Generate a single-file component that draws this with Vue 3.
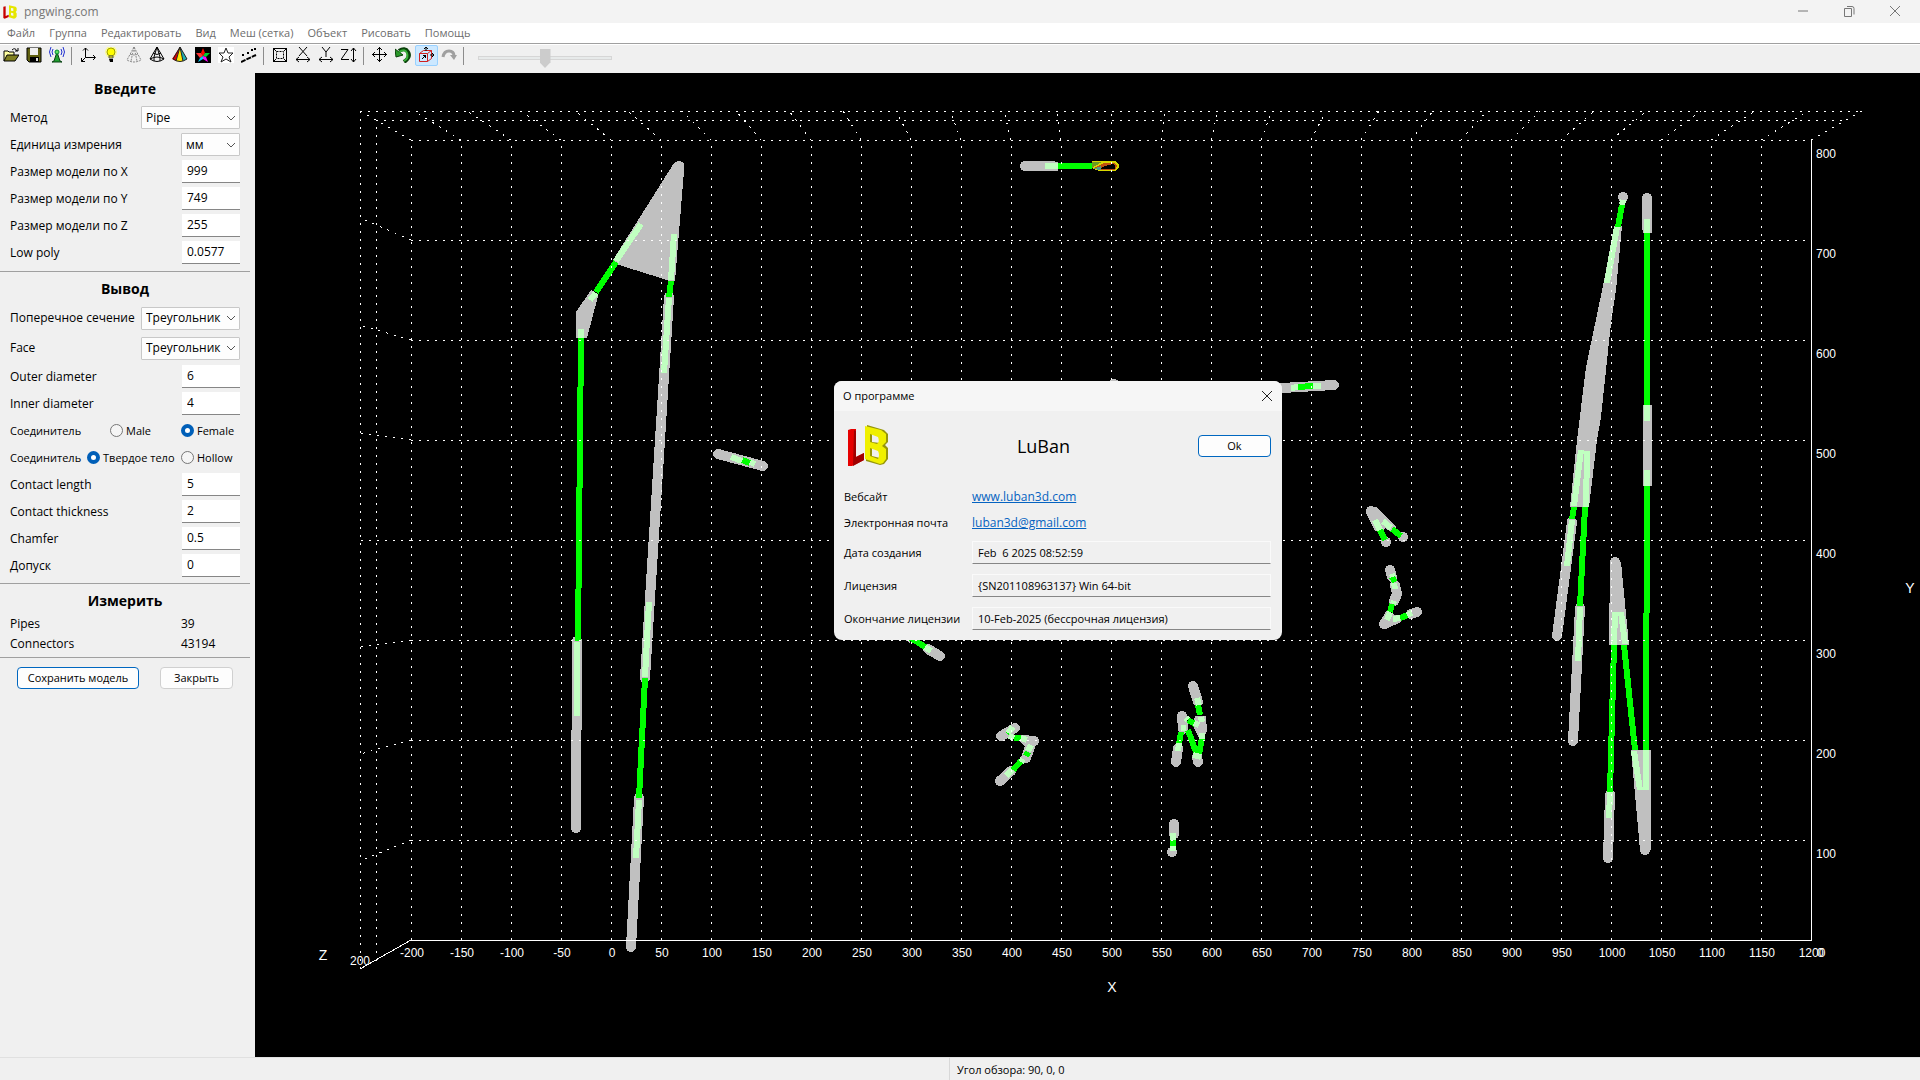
<script setup>
import { ref } from 'vue'

const menu = ['Файл', 'Группа', 'Редактировать', 'Вид', 'Меш (сетка)', 'Объект', 'Рисовать', 'Помощь']

const inputRows = ref([
  { id: 'size-x', label: 'Размер модели по X', value: '999' },
  { id: 'size-y', label: 'Размер модели по Y', value: '749' },
  { id: 'size-z', label: 'Размер модели по Z', value: '255' },
  { id: 'low-poly', label: 'Low poly', value: '0.0577' }
])
const diameterRows = ref([
  { id: 'outer', label: 'Outer diameter', value: '6' },
  { id: 'inner', label: 'Inner diameter', value: '4' }
])
const contactRows = ref([
  { id: 'length', label: 'Contact length', value: '5' },
  { id: 'thickness', label: 'Contact thickness', value: '2' },
  { id: 'chamfer', label: 'Chamfer', value: '0.5' },
  { id: 'tolerance', label: 'Допуск', value: '0' }
])
const aboutRows = ref([
  { id: 'built', label: 'Дата создания', value: 'Feb  6 2025 08:52:59' },
  { id: 'license', label: 'Лицензия', value: '{SN201108963137} Win 64-bit' },
  { id: 'expires', label: 'Окончание лицензии', value: '10-Feb-2025 (бессрочная лицензия)' }
])
const gender = ref('female')
const body = ref('solid')
const zoomLevel = ref(50)

// Scene coordinates: back wall spans 411..1811 by 140..940, front frame 360..1862 by 111..969
const columns = Array.from({ length: 29 }, (_, i) => ({
  x: 411 + i * 50,
  front: Math.round(360 + (i * 1502) / 28),
  label: String(-200 + i * 50)
}))
const rows = Array.from({ length: 8 }, (_, i) => ({
  y: 140 + i * 100,
  front: Math.round(111 + i * 107.2),
  label: String(800 - i * 100)
}))

// Connector bodies
const solids = [
  '674,163 684,163 684,171 675,281 670,281 616,264 613,260',
  '591,290 598,296 587,338 576,338 576,312',
  '1614,226 1622,226 1616,290 1611,323 1601,417 1597,440 1589,507 1570,507 1577,440 1586,367 1604,281',
  '1610,562 1621,562 1629,645 1609,645',
  '1631,750 1651,750 1651,850 1640,850',
  '1366,513 1376,507 1396,527 1391,532 1385,528 1382,531 1375,531',
  '1386,611 1393,614 1401,617 1401,622 1386,629 1380,622',
  '1021,735 1036,736 1038,741 1034,748 1029,751 1019,740',
  '1195,716 1206,716 1207,731 1204,738 1199,738 1193,726'
]
const knobs = [
  [679, 166], [1623, 197], [1615, 562], [1645, 850], [1371, 511], [1386, 542], [1403, 537],
  [1384, 624], [1390, 570], [1172, 852], [1114, 384], [1034, 741], [1182, 716]
]
const bars = [
  '577,641 576,828', '669,297 645,678', '639,798 631,947', '718,454 763,466', '1025,166 1053,166',
  '1282,388 1334,385', '1572,522 1557,636', '1580,608 1573,741', '1647,198 1647,228', '1610,795 1608,858',
  '928,649 940,656', '1390,570 1392,577', '1395,585 1397,594 1394,601', '1417,612 1411,614',
  '1015,728 1001,736', '1031,744 1026,758', '1011,771 1000,781', '1193,686 1198,702', '1182,716 1183,729',
  '1178,748 1176,762', '1197,757 1198,762', '1174,824 1174,834'
]
const squareBars = ['1647,405 1647,486', '1053,166 1058,166', '1647,228 1647,233', '1580,606 1580,610', '1572,519 1571,526', '1610,792 1610,798', '577,641 577,648', '669,297 668,302', '645,672 645,678', '639,798 638,804', '895,628 912,639']
const pipes = [
  '616,262 596,292', '581,338 578,641', '671,281 669,297', '645,678 639,798', '742,460 750,463',
  '1058,166 1092,166', '1298,387 1313,386', '1622,205 1618,227', '1574,507 1572,519', '1585,507 1580,606',
  '1647,233 1647,405', '1647,486 1646,750', '1614,645 1610,792', '1624,645 1635,750', '911,638 925,647',
  '1380,530 1385,540', '1392,529 1401,536', '1392,577 1395,582', '1392,604 1390,612', '1400,618 1408,615',
  '1014,738 1021,738', '1028,752 1026,756', '1021,761 1013,770', '1198,705 1200,715', '1188,720 1195,724',
  '1181,732 1179,744', '1188,730 1197,755', '1202,738 1199,754', '1173,839 1173,847', '1008,730 1011,733'
]
const joints = [
  '641,224 616,261', '674,234 671,280', '596,293 590,300', '581,329 581,338', '577,642 577,716', '669,298 664,373',
  '649,602 645,677', '639,800 636,858', '731,457 742,461', '750,462 755,464', '1045,166 1058,166', '1291,388 1298,387',
  '1313,386 1321,386', '1623,200 1622,205', '1617,227 1607,283', '1581,450 1574,506', '1587,451 1586,507',
  '1572,520 1567,566', '1580,607 1578,661', '1647,219 1647,233', '1647,405 1647,421', '1647,470 1647,486',
  '1615,612 1614,645', '1621,612 1625,644', '1610,792 1609,818', '1634,751 1640,790', '1646,750 1646,790',
  '1375,520 1380,530', '1383,521 1391,528', '1392,574 1393,577', '1394,583 1395,589', '1394,601 1393,604',
  '1390,612 1387,620', '1393,619 1400,618', '1407,615 1412,613', '1009,736 1014,738', '1021,738 1027,740',
  '1031,745 1028,751', '1023,759 1021,762', '1012,770 1006,776', '1197,698 1199,705', '1201,717 1202,722',
  '1194,723 1199,725', '1179,743 1178,751', '1202,733 1202,739', '1181,728 1186,728', '1193,755 1201,757',
  '1186,718 1188,720', '1173,833 1173,840', '1173,846 1173,851', '1013,727 1008,733', '925,647 931,651'
]
</script>

<template>
  <div class="app">
    <header class="titlebar">
      <svg class="app-icon" viewBox="0 0 42 42" aria-hidden="true">
        <path d="M1 5 8 4v29l9-4v7L5 41l-4-2z" fill="#c80000" />
        <path fill-rule="evenodd" d="M18 1l20 4 3 4v8l-3 4 3 4v10l-4 5-4 1-15-4zM24 9v8l7 1V10zm0 14v8l7 2v-8z" fill="#e6e600" />
      </svg>
      <h1>pngwing.com</h1>
      <div class="window-controls">
        <button type="button" aria-label="Свернуть"><svg viewBox="0 0 12 12"><path d="M1 6h10" /></svg></button>
        <button type="button" aria-label="Восстановить"><svg viewBox="0 0 12 12"><path d="M1.500 3.500h7v8h-7zM4 1.500h5q2 0 2 2v6" /></svg></button>
        <button type="button" aria-label="Закрыть окно"><svg viewBox="0 0 12 12"><path d="M1 1l10 10M11 1 1 11" /></svg></button>
      </div>
    </header>

    <nav class="menubar">
      <button v-for="item in menu" :key="item" type="button">{{ item }}</button>
    </nav>

    <div class="toolbar" role="toolbar">
      <button type="button" aria-label="Открыть">
        <svg viewBox="0 0 16 16"><path d="M1 14V4h4l1 1h5v3" fill="#ffffa0" stroke="#000" /><path d="M1 14l3-6h12l-4 6z" fill="#808020" stroke="#000" /><path d="M9 3q3-3 5 1m1-3v3h-3" fill="none" stroke="#000" /></svg>
      </button>
      <button type="button" aria-label="Сохранить">
        <svg viewBox="0 0 16 16"><path d="M1 1h14v14H3l-2-2z" fill="#606010" stroke="#000" /><path d="M4 1h8v7H4z" fill="#f0f0f0" /><path d="M4 10h9v5H4z" fill="#000" /><path d="M10 11h2v3h-2z" fill="#e0e0e0" /></svg>
      </button>
      <button type="button" aria-label="Соединение">
        <svg viewBox="0 0 16 16"><path d="M8 5l3 9 2 1H3l2-1z" fill="#20a030" stroke="#064010" /><circle cx="8" cy="5" r="2" fill="#60e060" stroke="#083" /><path d="M4 2q-2 3 0 6M12 2q2 3 0 6M2 0q-3 5 0 10M14 0q3 5 0 10" fill="none" stroke="#2030d0" /></svg>
      </button>
      <span class="divider"></span>
      <button type="button" aria-label="Оси">
        <svg viewBox="0 0 16 16"><path d="M5.500 1v9.500H15M5.500 10.500l-4 4M3 3.500l2.500-2.500 2.500 2.500M13 8l2.500 2.500L13 13M1.500 11v3.500H5" fill="none" stroke="#000" /></svg>
      </button>
      <button type="button" aria-label="Свет">
        <svg viewBox="0 0 16 16"><circle cx="8" cy="5" r="6" fill="#ffff60" opacity=".6" /><circle cx="8" cy="5" r="4" fill="#ff0" stroke="#a0a000" /><path d="M6 9h4v2H6z" fill="#ff0" stroke="#555" /><path d="M6 12h4v3H7z" fill="#000" /></svg>
      </button>
      <button type="button" aria-label="Точки">
        <svg viewBox="0 0 16 16"><path d="M8 0 1 13q7 4 14 0zM8 0 5 14M8 0l3 14M4 7q4 2 8 0" fill="none" stroke="#888" stroke-dasharray="2 1" /></svg>
      </button>
      <button type="button" aria-label="Каркас">
        <svg viewBox="0 0 16 16"><path d="M8 0 1 12q7 5 14 0zM1 12q7-4 14 0M8 0 5 10v4M8 0l3 10v4M4 6q4 3 8 0" fill="none" stroke="#000" /></svg>
      </button>
      <button type="button" aria-label="Заливка">
        <svg viewBox="0 0 16 16"><path d="M8 0 0 12l4 2z" fill="#e00000" /><path d="M8 0 4 14q4 1 7 0z" fill="#ffe800" /><path d="M8 0l3 14 4-2z" fill="#20b0b0" /><path d="M8 0 1 12q7 5 14 0zM8 0 4 14M8 0l3 14" fill="none" stroke="#222" /></svg>
      </button>
      <button type="button" aria-label="Текстура">
        <svg viewBox="0 0 16 16"><path d="M0 0h16v16H0z" /><path d="M8 1l2 5-2 3-2-3z" fill="#f00" /><path d="M1 6h5l2 3-3 2z" fill="#f33" /><path d="M10 6h5l-4 4-3-1z" fill="#0c3" /><path d="M5 11l3-2v3l-5 3z" fill="#0cf" /><path d="M8 9l3 1 2 5-5-3z" fill="#f0f" /></svg>
      </button>
      <button type="button" aria-label="Звезда">
        <svg viewBox="0 0 16 16"><path d="M0 0h16v16H0z" fill="#fff" /><path d="M8 1l2 5h5l-4 4 2 5-5-3-5 3 2-5-4-4h5z" fill="none" stroke="#222" /></svg>
      </button>
      <button type="button" aria-label="Линии">
        <svg viewBox="0 0 16 16"><path d="M0 15 15 8" stroke="#000" stroke-width="2" stroke-dasharray="5 1" /><path d="M1 7h2v2H1zM6 5h2v2H6zM10 2h2v2h-2zM13 1h2v2h-2z" /></svg>
      </button>
      <span class="divider"></span>
      <button type="button" aria-label="Вписать">
        <svg viewBox="0 0 16 16"><path d="M1.500 1.500h13v13h-13zM1 1l3 3M15 1l-3 3M1 15l3-3M15 15l-3-3" fill="none" stroke="#000" /><path d="M4.500 4.500h7v7h-7z" fill="none" stroke="#000" stroke-dasharray="2 1" /></svg>
      </button>
      <button type="button" aria-label="Размер X">
        <svg viewBox="0 0 16 16"><path d="M4 0l8 9M12 0 4 9M1 12.500h14M4 10l-3 2.500 3 2.500M12 10l3 2.500-3 2.500" fill="none" stroke="#000" /></svg>
      </button>
      <button type="button" aria-label="Размер Y">
        <svg viewBox="0 0 16 16"><path d="M4 0l4 5 4-5M8 5v5M1 12.500h14M4 10l-3 2.500 3 2.500M12 10l3 2.500-3 2.500" fill="none" stroke="#000" /></svg>
      </button>
      <button type="button" aria-label="Размер Z">
        <svg viewBox="0 0 16 16"><path d="M0 2.500h7L0 12.500h8M12.500 1v14M10 4l2.500-3L15 4M10 12l2.500 3 2.500-3" fill="none" stroke="#000" /></svg>
      </button>
      <span class="divider"></span>
      <button type="button" aria-label="Переместить">
        <svg viewBox="0 0 16 16"><path d="M7.500 0v15M0 7.500h15M5 3l2.500-2.500L10 3M5 12l2.500 2.500L10 12M3 5 .5 7.500 3 10M12 5l2.500 2.500L12 10" fill="none" stroke="#000" /></svg>
      </button>
      <button type="button" aria-label="Отменить">
        <svg viewBox="0 0 16 16"><path d="M4 4q6-4 9 1t-4 10" fill="none" stroke="#0a400a" stroke-width="4" /><path d="M0 2l1 8 7-2z" fill="#2a9a2a" stroke="#0a400a" /><path d="M4 5q6-4 8 1t-3 8" fill="none" stroke="#3ab03a" stroke-width="2" /></svg>
      </button>
      <button type="button" class="active" aria-label="Вращать">
        <svg viewBox="0 0 16 16"><path d="M1.500 6.500h8v8h-8zM1.500 6.500l4-3h8l-4 3M13.500 3.500v8l-4 3" fill="none" stroke="#d02020" /><path d="M4 12l4-4M5 8.500h2.500V11M8 0v4M6 2l2-2 2 2M12 8h4M14 6l2 2-2 2" fill="none" stroke="#000" /></svg>
      </button>
      <button type="button" aria-label="Повторить">
        <svg viewBox="0 0 16 16"><path d="M2 10q1-6 6-6t5 5" fill="none" stroke="#a0a0a0" stroke-width="3" /><path d="M9 8h7l-3 5z" fill="#a0a0a0" /></svg>
      </button>
      <span class="divider"></span>
      <input v-model="zoomLevel" class="slider" type="range" min="0" max="100" aria-label="Масштаб" />
    </div>

    <main class="workspace">
      <form class="sidebar" @submit.prevent>
        <section>
          <h2>Введите</h2>
          <div class="row">
            <label for="method">Метод</label>
            <div class="select wide">
              <select id="method"><option>Pipe</option></select>
              <svg viewBox="0 0 10 6"><path d="M1 1l4 4 4-4" /></svg>
            </div>
          </div>
          <div class="row">
            <label for="unit">Единица измрения</label>
            <div class="select">
              <select id="unit"><option>мм</option></select>
              <svg viewBox="0 0 10 6"><path d="M1 1l4 4 4-4" /></svg>
            </div>
          </div>
          <div v-for="r in inputRows" :key="r.id" class="row">
            <label :for="r.id">{{ r.label }}</label>
            <input :id="r.id" v-model="r.value" type="text" />
          </div>
        </section>

        <section class="output">
          <h2>Вывод</h2>
          <div class="row tall">
            <label for="cross">Поперечное сечение</label>
            <div class="select wide">
              <select id="cross"><option>Треугольник</option></select>
              <svg viewBox="0 0 10 6"><path d="M1 1l4 4 4-4" /></svg>
            </div>
          </div>
          <div class="row tall">
            <label for="face">Face</label>
            <div class="select wide">
              <select id="face"><option>Треугольник</option></select>
              <svg viewBox="0 0 10 6"><path d="M1 1l4 4 4-4" /></svg>
            </div>
          </div>
          <div v-for="r in diameterRows" :key="r.id" class="row">
            <label :for="r.id">{{ r.label }}</label>
            <input :id="r.id" v-model="r.value" type="text" />
          </div>
          <div class="row radios" role="radiogroup" aria-label="Соединитель">
            <span class="caption">Соединитель</span>
            <label class="first"><input v-model="gender" type="radio" name="gender" value="male" />Male</label>
            <label class="second"><input v-model="gender" type="radio" name="gender" value="female" />Female</label>
          </div>
          <div class="row radios" role="radiogroup" aria-label="Соединитель">
            <span class="caption">Соединитель</span>
            <label class="first long"><input v-model="body" type="radio" name="body" value="solid" />Твердое тело</label>
            <label class="second"><input v-model="body" type="radio" name="body" value="hollow" />Hollow</label>
          </div>
          <div v-for="r in contactRows" :key="r.id" class="row">
            <label :for="r.id">{{ r.label }}</label>
            <input :id="r.id" v-model="r.value" type="text" />
          </div>
        </section>

        <section class="measure">
          <h2>Измерить</h2>
          <dl>
            <div><dt>Pipes</dt><dd>39</dd></div>
            <div><dt>Connectors</dt><dd>43194</dd></div>
          </dl>
        </section>

        <div class="actions">
          <button type="button" class="primary save">Сохранить модель</button>
          <button type="button" class="close">Закрыть</button>
        </div>
      </form>

      <div class="viewport">
        <svg class="scene" viewBox="255 73 1665 984" role="img" aria-label="Модель">
          <g shape-rendering="crispEdges">
            <g fill="#c0c0c0">
              <polygon v-for="p in solids" :key="p" :points="p" />
              <circle v-for="k in knobs" :key="k.join()" :cx="k[0]" :cy="k[1]" r="5" />
            </g>
            <g class="bar"><polyline v-for="p in bars" :key="p" :points="p" /></g>
            <g class="bar square"><polyline v-for="p in squareBars" :key="p" :points="p" /></g>
            <g class="pipe"><polyline v-for="p in pipes" :key="p" :points="p" /></g>
            <g class="joint"><polyline v-for="p in joints" :key="p" :points="p" /></g>
            <path d="M1092 161h22q5 1 5 5t-5 5h-15l-7-3z" fill="#d8d800" />
            <path d="M1092 162h10l-10 6z" fill="#6b9b20" />
            <path d="M1094 168l10-5h11l2 3-2 4h-14z" fill="#c05010" />
            <path d="M1102 167l11-3 2 1v4h-14z" fill="#000" />
            <path d="M1093 169l8-3v4z" fill="#50a080" />
            <g class="grid">
              <path v-for="c in columns.slice(0, 28)" :key="'v' + c.x" :d="`M${c.x} 940V140`" />
              <path v-for="c in columns" :key="'t' + c.x" :d="`M${c.x} 140L${c.front} 111`" />
              <path v-for="r in rows" :key="'h' + r.y" :d="`M411 ${r.y}H1811`" />
              <path v-for="r in rows" :key="'s' + r.y" :d="`M411 ${r.y}L360 ${r.front}`" />
              <path d="M360 111H1862M376 120H1847M360 969V111M376 961V120" />
            </g>
            <path d="M360 969 411 940H1811V140" fill="none" stroke="#fff" />
          </g>
          <g class="ticks">
            <text v-for="c in columns" :key="'l' + c.x" :x="c.x + 1" y="957" text-anchor="middle">{{ c.label }}</text>
            <text v-for="r in rows" :key="'r' + r.y" x="1816" :y="r.y + 18">{{ r.label }}</text>
            <text x="1817" y="957">0</text>
            <text x="360" y="965" text-anchor="middle">200</text>
          </g>
          <g class="axes">
            <text x="323" y="960">Z</text>
            <text x="1112" y="992">X</text>
            <text x="1910" y="593">Y</text>
          </g>
        </svg>

        <section class="dialog" role="dialog" aria-labelledby="about-title">
          <header>
            <h2 id="about-title">О программе</h2>
            <button type="button" aria-label="Закрыть"><svg viewBox="0 0 12 12"><path d="M1 1l10 10M11 1 1 11" /></svg></button>
          </header>
          <div class="brand">
            <svg class="logo" viewBox="0 0 42 42" aria-hidden="true">
              <path d="M1 5 4 4h5v28l8-4v7L5 41H1z" fill="#e60000" />
              <path d="M7 5l2 1v26l8-4v7L6 41z" fill="#a00000" />
              <path fill-rule="evenodd" d="M20 0l17 5 4 4v8l-3 3 3 3v11l-4 5-4 1-14-4zM25 9v8l8 1V12zm0 14v8l8 2v-7z" fill="#96960a" />
              <path fill-rule="evenodd" d="M18 1l16 4 5 4v8l-4 4 4 3v10l-3 4-3 1-15-5zM23 9v8l7 2q3-2 1-7zm0 14v8l8 3q2-4 0-8z" fill="#f0f000" />
            </svg>
            <strong>LuBan</strong>
            <button type="button" class="primary">Ok</button>
          </div>
          <div class="link-row"><span>Вебсайт</span><a href="#site">www.luban3d.com</a></div>
          <div class="link-row"><span>Электронная почта</span><a href="#mail">luban3d@gmail.com</a></div>
          <div v-for="r in aboutRows" :key="r.id" class="about-row">
            <label :for="r.id">{{ r.label }}</label>
            <input :id="r.id" :value="r.value" type="text" readonly />
          </div>
        </section>
      </div>
    </main>

    <footer class="statusbar">
      <div></div>
      <div class="angle">Угол обзора: 90, 0, 0</div>
    </footer>
  </div>
</template>

<style>
body {
  margin: 0;
}
</style>

<style scoped>
.app {
  display: flex;
  flex-direction: column;
  min-height: 100vh;
  background: #f0f0f0;
  color: #000;
  font: 12px/16px 'Open Sans', 'Noto Sans', sans-serif;
}
.app *, .app {
  box-sizing: border-box;
}
button, input, select {
  font: inherit;
  color: inherit;
}
h1, h2, dl, dd {
  margin: 0;
}

.titlebar {
  display: flex;
  align-items: center;
  height: 23px;
  background: #f3f3f3;
  color: #777;
}
.app-icon {
  width: 14px;
  height: 14px;
  margin: 0 7px 0 3px;
}
.titlebar h1 {
  flex: 1;
  font-size: 12px;
  font-weight: 400;
}
.window-controls {
  display: flex;
  padding: 0 2px 2px 0;
}
.window-controls button {
  display: grid;
  place-items: center;
  width: 46px;
  height: 20px;
  padding: 0;
  border: 0;
  background: none;
}
.window-controls svg {
  width: 12px;
  height: 12px;
  fill: none;
  stroke: #777;
}

.menubar {
  display: flex;
  height: 21px;
  border-bottom: 1px solid #a0a0a0;
  background: #fff;
}
.menubar button {
  padding: 0 7px;
  border: 0;
  background: none;
  color: #6d6d6d;
  font-size: 11px;
}

.toolbar {
  display: flex;
  align-items: flex-start;
  height: 29px;
  border-top: 1px solid #fff;
}
.toolbar button {
  display: grid;
  place-items: center;
  width: 23px;
  height: 21px;
  padding: 0 1px 1px 0;
  border: 1px solid transparent;
  border-radius: 2px;
  background: none;
}
.toolbar button.active {
  border-color: #99d1ff;
  background: #cce8ff;
}
.toolbar button svg {
  width: 16px;
  height: 16px;
}
.divider {
  width: 8px;
  height: 18px;
  margin: 2px -2px 0 2px;
  border-left: 1px solid #8c8c8c;
}
.slider {
  width: 134px;
  height: 22px;
  margin: 2px 0 0 9px;
  appearance: none;
  background: none;
}
.slider::-webkit-slider-runnable-track {
  height: 4px;
  border: 1px solid #d6d6d6;
  background: #e7eaea;
}
.slider::-webkit-slider-thumb {
  appearance: none;
  width: 11px;
  height: 19px;
  margin-top: -8px;
  background: #ccc;
  clip-path: polygon(0 0, 100% 0, 100% 70%, 50% 100%, 0 70%);
}

.workspace {
  display: flex;
  flex: 1;
}
.sidebar {
  width: 255px;
  padding-right: 5px;
}
.sidebar section {
  padding-bottom: 5px;
  border-bottom: 1px solid #a0a0a0;
}
.sidebar h2 {
  padding: 5px 0 4px;
  font-size: 14px;
  line-height: 22px;
  text-align: center;
}
.sidebar .output {
  padding-bottom: 4px;
}
.output h2 {
  padding: 6px 0 3px;
}
.row {
  display: flex;
  align-items: center;
  justify-content: space-between;
  height: 27px;
  padding: 0 10px;
}
.row.tall {
  height: 30px;
}
.row input[type='text'] {
  width: 58px;
  height: 23px;
  padding: 0 5px 1px;
  border: 0;
  border-bottom: 1px solid #868686;
  background: #fff;
}
.select {
  display: grid;
  align-items: center;
  width: 59px;
}
.select.wide {
  width: 99px;
}
.select select,
.select svg {
  grid-area: 1 / 1;
}
.select select {
  height: 23px;
  padding: 0 4px;
  border: 1px solid #c8c8c8;
  border-radius: 1px;
  appearance: none;
  background: #fdfdfd;
}
.select svg {
  justify-self: end;
  width: 10px;
  height: 6px;
  margin-right: 4px;
  fill: none;
  stroke: #555;
  pointer-events: none;
}
.radios {
  font-size: 11px;
}
.radios label {
  display: flex;
  align-items: center;
  gap: 3px;
  white-space: nowrap;
}
.radios .caption {
  flex: 1;
}
.radios .first {
  width: 71px;
}
.radios .long {
  width: 94px;
}
.radios .second {
  width: 59px;
}
.radios input {
  width: 13px;
  height: 13px;
  margin: 0;
  border: 1px solid #777;
  border-radius: 50%;
  appearance: none;
  background: #f5f5f5;
}
.radios input:checked {
  border: 4px solid #005fb8;
  background: #fff;
}
.measure dl div {
  display: flex;
  height: 20px;
  align-items: center;
  padding: 0 10px;
}
.sidebar .measure {
  padding-bottom: 3px;
}
.measure h2 {
  padding: 6px 0 2px;
}
.measure dt {
  width: 171px;
}
.actions {
  display: flex;
  gap: 21px;
  padding: 9px 17px;
}
.actions button,
.brand button {
  height: 22px;
  padding: 0;
  border: 1px solid #d0d0d0;
  border-radius: 4px;
  background: #fdfdfd;
  font-size: 11px;
  white-space: nowrap;
}
.actions .primary,
.brand .primary {
  border-color: #0067c0;
}
.save {
  width: 122px;
}
.close {
  width: 73px;
}

.viewport {
  position: relative;
  flex: 1;
  min-width: 0;
  background: #000;
}
.scene {
  display: block;
  width: 100%;
  height: 100%;
}
.bar {
  fill: none;
  stroke: #c0c0c0;
  stroke-width: 10;
  stroke-linecap: round;
  stroke-linejoin: round;
}
.square {
  stroke-width: 9;
  stroke-linecap: butt;
}
.pipe {
  fill: none;
  stroke: #0f0;
  stroke-width: 6;
}
.joint {
  fill: none;
  stroke: #c0ffc0;
  stroke-width: 6;
}
.grid {
  fill: none;
  stroke: #fff;
  stroke-dasharray: 2 6;
}
.ticks {
  fill: #fff;
  font: 12px 'Liberation Sans', Arial, sans-serif;
}
.axes {
  fill: #fff;
  font: 14px 'Liberation Sans', Arial, sans-serif;
  text-anchor: middle;
}

.dialog {
  position: absolute;
  top: 308px;
  left: 579px;
  width: 448px;
  padding-bottom: 5px;
  overflow: hidden;
  border-radius: 8px;
  background: #f0f0f0;
}
.dialog header {
  display: flex;
  align-items: center;
  justify-content: space-between;
  height: 30px;
  padding: 0 9px;
  background: #f6f6f6;
}
.dialog header h2 {
  font-size: 11px;
  font-weight: 400;
}
.dialog header button {
  display: grid;
  padding: 0;
  border: 0;
  background: none;
}
.dialog header svg {
  width: 12px;
  height: 12px;
  fill: none;
  stroke: #222;
}
.brand {
  display: flex;
  align-items: center;
  justify-content: space-between;
  height: 69px;
  margin-bottom: 4px;
  padding: 0 11px 0 13px;
}
.logo {
  width: 42px;
  height: 42px;
}
.brand strong {
  font-size: 18px;
  font-weight: 400;
}
.brand button {
  width: 73px;
}
.link-row,
.about-row {
  display: flex;
  align-items: center;
  height: 26px;
  padding: 0 11px 0 10px;
}
.link-row span {
  width: 128px;
  font-size: 11px;
}
.link-row a {
  color: #0563c1;
}
.about-row {
  height: 33px;
  font-size: 11px;
}
.about-row label {
  width: 128px;
  white-space: nowrap;
}
.about-row input {
  flex: 1;
  min-width: 0;
  height: 23px;
  padding: 0 5px 1px;
  border: 1px solid #fafafa;
  border-bottom-color: #868686;
  background: #f0f0f0;
  white-space: pre;
}

.statusbar {
  display: flex;
  height: 23px;
  font-size: 11px;
}
.statusbar div {
  flex: 0 0 950px;
  border-top: 1px solid #e0e0e0;
  border-right: 1px solid #d8d8d8;
}
.statusbar .angle {
  flex: 1;
  padding: 4px 7px;
  border-right: 0;
}
</style>
